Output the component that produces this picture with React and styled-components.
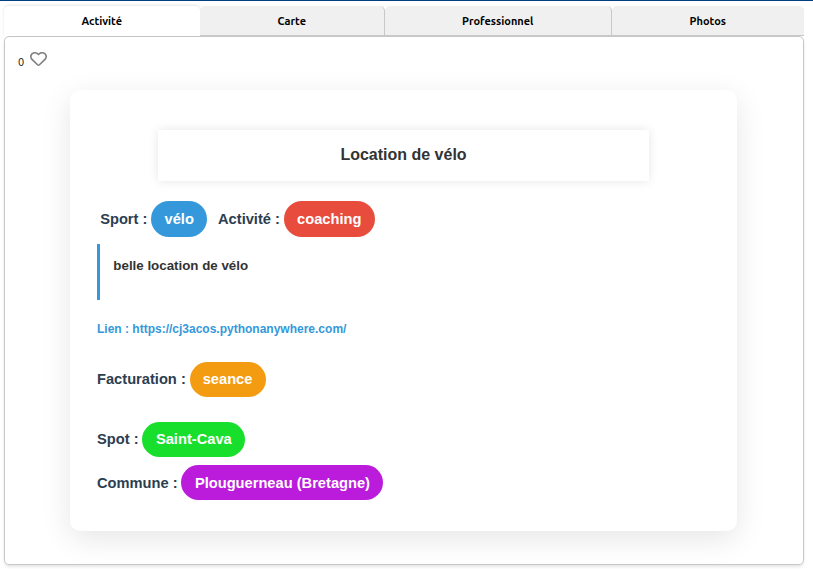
import React from "react";
import styled, { createGlobalStyle } from "styled-components";

const GlobalStyle = createGlobalStyle`
  *, *::before, *::after { box-sizing: border-box; }
  body { margin: 0; background: #fff; overflow: hidden; }
`;

const Page = styled.div`
  height: 569px;
  padding: 5px 9px 0 4px;
  border-top: 1px solid #003e7e;
  font-family: "Liberation Sans", Arial, sans-serif;
  background: #fff;
`;

const TabBar = styled.nav`
  display: grid;
  grid-template-columns: 196px 185px 227px 192px;
  height: 30px;
`;

const Tab = styled.button`
  margin: 0;
  padding: 1px 0.5px 0 0;
  border: 0 solid #c8c8c8;
  border-right-width: ${(p) => (p.$divider ? "1px" : "0")};
  border-radius: 5px 5px 0 0;
  background: ${(p) => (p.$active ? "#fff" : "#f0f0f0")};
  box-shadow: ${(p) => (p.$active ? "0 -1px 3px rgba(0, 0, 0, 0.1)" : "inset 0 -1px 0 #c8c8c8")};
  color: #000;
  font: bold 11px/29px "Ubuntu", "Noto Sans", sans-serif;
`;

const Panel = styled.section`
  height: 529px;
  padding: 14px 0 0 13px;
  border: 1px solid #c8c8c8;
  border-radius: 5px;
  box-shadow: 0 2px 3px rgba(0, 0, 0, 0.1);
`;

const Likes = styled.div`
  display: flex;
  gap: 6px;
  height: 18px;
  color: #111;
  font: 11px/22px "Ubuntu", "Noto Sans", sans-serif;
`;

const HeartIcon = styled.svg`
  width: 17px;
  height: 16px;
`;

const Card = styled.article`
  width: 667px;
  height: 441px;
  margin: 21px 0 0 52px;
  padding: 40px 27px 0;
  border-radius: 10px;
  background: #fff;
  box-shadow: 0 8px 30px rgba(0, 0, 0, 0.1);
`;

const Title = styled.h1`
  width: 491px;
  height: 51px;
  margin: 0 auto 20px 61px;
  color: #333;
  background: #fff;
  box-shadow: 0 0 10px rgba(0, 0, 0, 0.1);
  font-size: 16px;
  line-height: 50px;
  text-align: center;
`;

const Row = styled.div`
  display: flex;
  align-items: center;
  height: ${(p) => p.$height || "35px"};
  margin-bottom: ${(p) => p.$after || "0"};
  padding-left: ${(p) => p.$indent || "0"};
  gap: 10.8px;
`;

const Field = styled.div`
  display: flex;
  align-items: center;
  gap: 3.82px;
  height: 100%;
  color: #2c3e50;
  font-size: 14.667px;
  font-weight: bold;
  white-space: nowrap;
`;

const Pill = styled.span`
  display: flex;
  align-items: center;
  justify-content: center;
  width: ${(p) => p.$width};
  height: 100%;
  border-radius: 20px;
  background: ${(p) => p.$color};
  color: #fff;
`;

const Description = styled.blockquote`
  height: 56px;
  margin: 0 0 21px;
  padding: 14px 0 0 13.333px;
  border-left: 3px solid #3498db;
  color: #333;
  font-size: 13.333px;
  font-weight: bold;
  line-height: 16px;
`;

const Link = styled.a`
  display: block;
  height: 16px;
  margin-bottom: 24.6px;
  color: #3498db;
  font-size: 12px;
  font-weight: bold;
  line-height: 16px;
  text-decoration: none;
`;

const LabeledPill = ({ label, color, width, children }) => (
  <Field>
    <span>{label} :</span>
    <Pill $color={color} $width={width}>{children}</Pill>
  </Field>
);

export default function App() {
  return (
    <>
      <GlobalStyle />
      <Page>
        <TabBar>
          <Tab $active>Activité</Tab>
          <Tab $divider>Carte</Tab>
          <Tab $divider>Professionnel</Tab>
          <Tab>Photos</Tab>
        </TabBar>
        <Panel>
          <Likes>
            <span>0</span>
            <HeartIcon viewBox="0 0 512 512" preserveAspectRatio="none" fill="#808080">
              <path d="M458.4 64.3C400.6 15.7 311.3 23 256 79.3 200.7 23 111.4 15.6 53.6 64.3-21.6 127.6-10.6 230.8 43 285.5l175.4 178.7c10 10.200 23.400 15.900 37.600 15.900 14.300 0 27.600-5.600 37.600-15.800L469 285.600c53.500-54.700 64.700-157.900-10.600-221.300zm-23.600 187.500L259.400 430.500c-2.400 2.400-4.400 2.400-6.800 0L77.200 251.800c-36.500-37.200-43.900-107.600 7.300-150.700 38.900-32.700 98.900-27.800 136.500 10.500l35 35.700 35-35.700c37.800-38.500 97.800-43.200 136.500-10.600 51.100 43.100 43.500 113.900 7.300 150.800z" />
            </HeartIcon>
          </Likes>
          <Card>
            <Title>Location de vélo</Title>
            <Row $height="36px" $after="7px" $indent="3.2px">
              <LabeledPill label="Sport" color="#3498db" width="56px">vélo</LabeledPill>
              <LabeledPill label="Activité" color="#e74c3c" width="91px">coaching</LabeledPill>
            </Row>
            <Description>belle location de vélo</Description>
            <Link>Lien : https://cj3acos.pythonanywhere.com/</Link>
            <Row $after="25px">
              <LabeledPill label="Facturation" color="#f39c12" width="76px">seance</LabeledPill>
            </Row>
            <Row $after="8.7px">
              <LabeledPill label="Spot" color="#18df2c" width="103px">Saint-Cava</LabeledPill>
            </Row>
            <Row>
              <LabeledPill label="Commune" color="#bb1cdb" width="202px">Plouguerneau (Bretagne)</LabeledPill>
            </Row>
          </Card>
        </Panel>
      </Page>
    </>
  );
}
